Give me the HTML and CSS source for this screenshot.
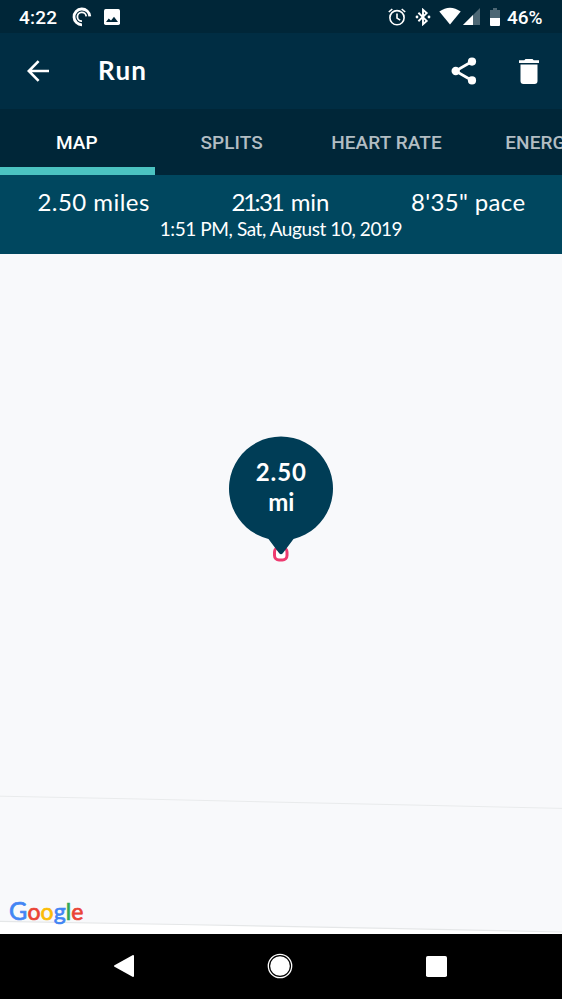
FILE: index.html
```html
<!DOCTYPE html>
<html lang="en">
<head>
<meta charset="utf-8">
<title>Run</title>
<link rel="stylesheet" href="styles.css">
</head>
<body>
<div class="screen">
  <div class="status">
    <span class="clock">4:22</span>
    <svg class="cast" width="20" height="20" viewBox="0 0 20 20" fill="none" stroke="#fff"><path d="M10 17.8A7.9 7.9 0 1 1 17.8 9.400" stroke-width="2.8"/><path d="M10 14.1A4.4 4.4 0 1 1 14.2 9.400" stroke-width="1.8"/></svg>
    <svg class="photo" width="16" height="16" viewBox="0 0 16 16"><rect width="16" height="16" rx="1.7" fill="#fff"/><path d="M2 13l2.700-3.500 2.300 2 3-3.700L14 13z" fill="#002638"/></svg>
    <span class="spacer"></span>
    <svg class="alarm" width="18" height="18" viewBox="0 0 18 18" fill="none" stroke="#fff" stroke-width="1.6"><circle cx="9" cy="9.7" r="7.1"/><path d="M9 5.500v4.600l3.200 2M.8 4L4.300 1M17.200 4L13.700 1"/></svg>
    <svg class="bluetooth" width="16" height="18" viewBox="0 0 16 18"><path d="M3.400 4.700l8.300 8.200L8 16.200V1.800l3.700 3.300-8.300 8.200" fill="none" stroke="#fff" stroke-width="1.9"/><circle cx="2" cy="9" r="1.4" fill="#fff"/><circle cx="14" cy="9" r="1.4" fill="#fff"/></svg>
    <svg class="wifi" width="22" height="18" viewBox="0 0 22 18"><path d="M.3 4.500Q11-3.200 21.700 4.500L11 17.500z" fill="#fff"/></svg>
    <svg class="signal" width="17" height="17" viewBox="0 0 17 17"><path d="M0 17L17 0v17z" fill="#4d6774"/><path d="M0 17L10 7v10z" fill="#fff"/></svg>
    <svg class="battery" width="10" height="18" viewBox="0 0 10 18"><path d="M3 0h4v2h3v8H0V2h3z" fill="#4d6774"/><path d="M0 10h10v7a1 1 0 0 1-1 1H1a1 1 0 0 1-1-1z" fill="#fff"/></svg>
    <span class="percent">46%</span>
  </div>
  <header class="appbar">
    <svg class="back" width="22" height="22" viewBox="0 0 22 22" fill="none" stroke="#fff" stroke-width="2.6"><path d="M22 11H2M11.600 1.200L1.800 11l9.800 9.800"/></svg>
    <h1 class="title">Run</h1>
    <span class="spacer"></span>
    <svg class="share" width="26" height="28" viewBox="0 0 26 28"><path d="M21 4.500L4.500 14 21 23.500" fill="none" stroke="#fff" stroke-width="2.7"/><g fill="#fff"><circle cx="21" cy="4.600" r="4.1"/><circle cx="4.700" cy="14" r="4.2"/><circle cx="21" cy="23.400" r="4.1"/></g></svg>
    <svg class="trash" width="20" height="25" viewBox="0 0 20 25" fill="#fff"><path d="M0 1.300h5.300L6.500 0h7l1.200 1.300H20V4H0z"/><path d="M1.500 5.600h17V22a3 3 0 0 1-3 3h-11a3 3 0 0 1-3-3z"/></svg>
  </header>
  <nav class="tabs">
    <div class="tab active">MAP</div>
    <div class="tab">SPLITS</div>
    <div class="tab">HEART RATE</div>
    <div class="tab">ENERGY</div>
  </nav>
  <section class="summary">
    <div class="stats">
      <span class="miles">2.50 miles</span>
      <span class="time"><span class="digit">2</span><span class="one">1</span><span class="colon">:</span><span class="digit">3</span>1 min</span>
      <span class="pace">8'35" pace</span>
    </div>
    <div class="date">1:51 PM, Sat, August 10, 2019</div>
  </section>
  <main class="map">
    <svg class="roads" width="562" height="680" viewBox="0 0 562 680" fill="none"><path d="M0 667.300L180 670.200 562 678V680H0z" fill="#fff"/><path d="M0 542.200L140 545 280 548.200 420 551.200 562 554.400" stroke="#e9ebec"/><path d="M0 667.300L180 670.500 400 674.700 562 678" stroke="#e5e7e8" stroke-width="1.2"/></svg>
    <div class="pin">
      <svg class="pin-shape" width="106" height="128" viewBox="0 0 106 128"><rect x="46.500" y="112.500" width="12.500" height="12.500" rx="4.5" fill="#fff" stroke="#ee3b70" stroke-width="3"/><path d="M40.500 104A52 52 0 1 1 65.500 104L55 118Q53 120.500 51 118z" fill="#003d56"/></svg>
      <div class="pin-label"><span class="distance">2.50</span><span class="unit">mi</span></div>
    </div>
    <div class="google"><span class="blue capital">G</span><span class="red">o</span><span class="yellow">o</span><span class="blue">g</span><span class="green">l</span><span class="red">e</span></div>
  </main>
  <footer class="navbar">
    <svg width="20" height="22" viewBox="0 0 20 22"><path d="M19 1v20L1 11z" fill="#fff" stroke="#fff" stroke-width="2" stroke-linejoin="round"/></svg>
    <svg width="26" height="26" viewBox="0 0 26 26"><circle cx="13" cy="13" r="11.700" fill="none" stroke="#fff" stroke-width="1.3"/><circle cx="13" cy="13" r="9.800" fill="#fff"/></svg>
    <svg width="21" height="21" viewBox="0 0 21 21"><rect width="21" height="21" rx="1.8" fill="#fff"/></svg>
  </footer>
</div>
</body>
</html>
```
FILE: styles.css
```css
* { box-sizing: border-box; }
body { margin: 0; }
svg { display: block; flex: none; }
.screen {
  width: 562px;
  height: 999px;
  overflow: hidden;
  display: flex;
  flex-direction: column;
  color: #fff;
  font-family: Lato, sans-serif;
  white-space: nowrap;
}
.spacer { flex: 1; }
.status {
  height: 33px;
  flex: none;
  display: flex;
  align-items: center;
  background: #002638;
  padding: 0 19px;
  font: 500 19px/33px Roboto, sans-serif;
}
.clock { width: 53px; padding-top: 1px; letter-spacing: 0.2px; }
.photo { margin-left: 12px; }
.alarm { margin-right: 9px; }
.bluetooth { margin-right: 8px; }
.wifi { margin-right: 2px; margin-top: -2px; }
.signal { margin-right: 10px; }
.battery { margin-right: 7px; }
.percent { width: 36px; padding-top: 1px; }
.appbar {
  height: 76px;
  flex: none;
  display: flex;
  align-items: center;
  background: #002d43;
  padding: 0 23px 0 27px;
}
.title {
  margin: -2px 0 0 49px;
  font: 700 26px/32px Lato, sans-serif;
  letter-spacing: 1.2px;
}
.share { margin-right: 42px; }
.tabs {
  height: 66px;
  flex: none;
  display: flex;
  background: #002638;
  color: #b2bdc3;
  font: 500 19px/67px Roboto, sans-serif;
}
.tab { width: 154.800px; flex: none; text-align: center; letter-spacing: 0.1px; text-indent: -1px; }
.active { color: #fff; border-bottom: 8px solid #4bc3c1; }
.summary {
  height: 79px;
  flex: none;
  background: #00475f;
  padding-top: 12px;
}
.stats {
  height: 30px;
  display: flex;
  justify-content: space-between;
  padding: 0 36.500px 0 37.500px;
  font-size: 24px;
  line-height: 29px;
}
.miles { letter-spacing: 0.45px; }
.time { letter-spacing: -0.1px; }
.digit { letter-spacing: -2.200px; }
.one { letter-spacing: -2.700px; }
.colon { letter-spacing: -1.500px; }
.pace { letter-spacing: 0.35px; }
.date { text-align: center; font-size: 19px; line-height: 24px; letter-spacing: -0.42px; }
.map { position: relative; height: 680px; flex: none; background: #f8f9fb; }
.pin { position: absolute; left: 228.300px; top: 181px; width: 106px; height: 128px; }
.pin-label {
  position: absolute;
  inset: 22px 0 auto;
  display: flex;
  flex-direction: column;
  align-items: center;
  font: 700 24px/30px Lato, sans-serif;
}
.distance { letter-spacing: 0.9px; }
.google {
  position: absolute;
  left: 9px;
  top: 641px;
  font: 400 23px/30px Lato, sans-serif;
  letter-spacing: 0.1px;
  -webkit-text-stroke: 0.7px;
}
.capital { font-size: 25px; }
.blue { color: #4285f4; }
.red { color: #ea4335; }
.yellow { color: #fbbc05; }
.green { color: #34a853; }
.navbar {
  height: 65px;
  flex: none;
  display: flex;
  align-items: center;
  justify-content: space-between;
  padding: 0 115.500px 1px 114px;
  background: #000;
}
```
